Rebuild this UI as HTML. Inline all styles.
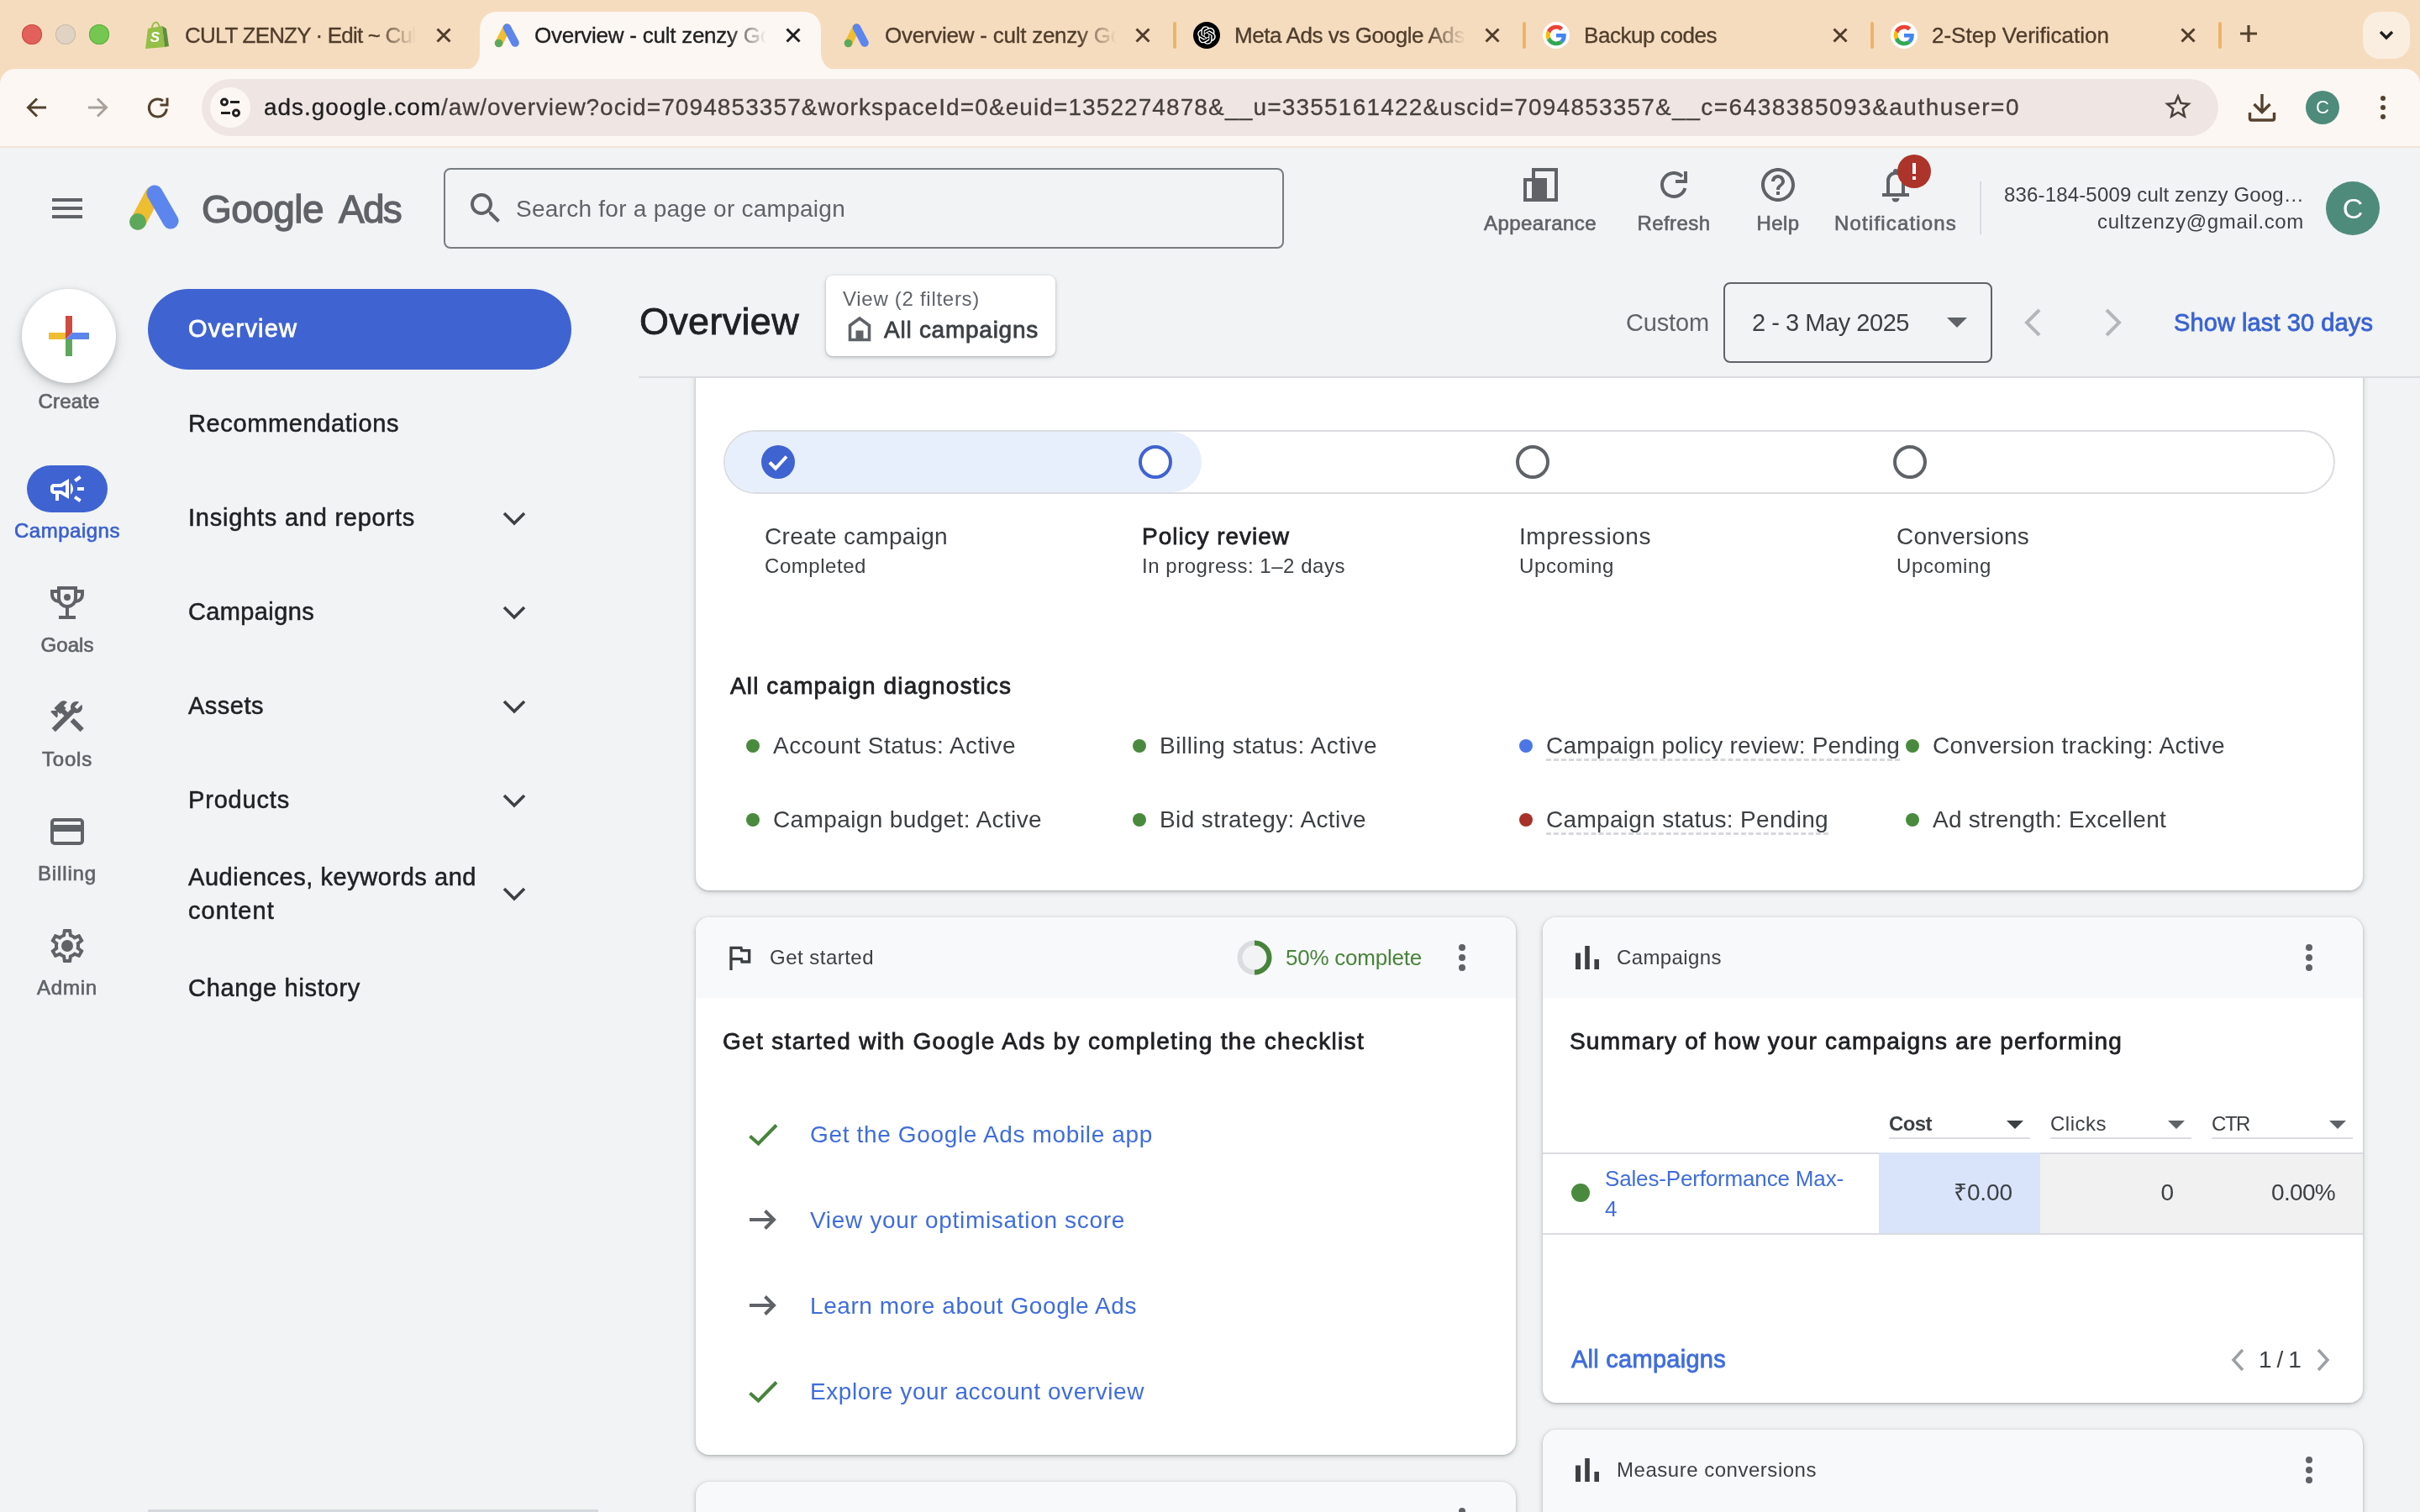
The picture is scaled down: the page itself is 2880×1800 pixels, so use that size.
<!DOCTYPE html>
<html><head><meta charset="utf-8"><title>Overview - cult zenzy Google Ads</title>
<style>
html,body{margin:0;padding:0}
body{width:2880px;height:1800px;overflow:hidden;position:relative;background:#f1f3f4;font-family:"Liberation Sans", sans-serif;}
.a{position:absolute;display:block}
.t{position:absolute;white-space:nowrap;display:block}
#r{position:absolute;left:0;top:0;width:2880px;height:1800px;overflow:hidden;will-change:transform}
</style></head><body><div id="r">
<div class="a" style="left:0px;top:0px;width:2880px;height:176px;background:#f6dcbf"></div>
<div class="a" style="left:0px;top:82px;width:2880px;height:92px;background:#fdf7f3;border-radius:18px 18px 0 0"></div>
<div class="a" style="left:0px;top:174px;width:2880px;height:2px;background:#f3e3d6"></div>
<div class="a" style="left:26px;top:29px;width:24px;height:24px;background:#e3615b;border-radius:50%;box-shadow:inset 0 0 0 1px #cc4a44"></div>
<div class="a" style="left:66px;top:29px;width:24px;height:24px;background:#e0d3c3;border-radius:50%;box-shadow:inset 0 0 0 1px #c6b9aa"></div>
<div class="a" style="left:106px;top:29px;width:24px;height:24px;background:#75c752;border-radius:50%;box-shadow:inset 0 0 0 1px #58ad3f"></div>
<svg class="a" style="left:549px;top:14px" width="450" height="70" viewBox="0 0 450 70">
<path fill="#fdf7f3" d="M0 70 C14 70 22 62 22 48 L22 22 C22 8 30 0 44 0 L406 0 C420 0 428 8 428 22 L428 48 C428 62 436 70 450 70 Z"></path></svg>
<svg class="a" style="left:172px;top:25px" width="32" height="34" viewBox="0 0 32 34"><path fill="#95bf47" d="M4 9 L21 6 L24 31 L1 33 Z"></path><path fill="#5e8e3e" d="M21 6 L26 9 L29 30 L24 31 Z"></path>
<path fill="none" stroke="#95bf47" stroke-width="2" d="M9 9 C9 2 14 0 16 3 C18 6 18 8 18 8"></path>
<text x="12.5" y="25" font-family="&quot;Liberation Sans&quot;,sans-serif" font-size="17" font-weight="700" font-style="italic" fill="#fff" text-anchor="middle">S</text></svg>
<div class="t" style="left:220px;top:25px;width:277px;overflow:hidden;font-size:26px;line-height:34px;color:#4e3d2c;-webkit-text-stroke:0.35px #4e3d2c;-webkit-mask-image:linear-gradient(to right,#000 229px,transparent 275px);mask-image:linear-gradient(to right,#000 229px,transparent 275px)"><span style="letter-spacing: -0.827px;">CULT ZENZY · Edit ~ Cul</span></div>
<svg class="a" style="left:519px;top:33px" width="18" height="18" viewBox="0 0 18 18"><path d="M1.5 1.5 L16.5 16.5 M16.5 1.5 L1.5 16.5" stroke="#4e3d2c" stroke-width="3" fill="none"></path></svg>
<svg class="a" style="left:588px;top:27px" width="32" height="30" viewBox="0 0 32 30"><line x1="15" y1="6" x2="6" y2="24" stroke="#efbd32" stroke-width="9.5" stroke-linecap="round"></line>
<line x1="15.5" y1="6" x2="25" y2="24" stroke="#5c85ee" stroke-width="9.5" stroke-linecap="round"></line>
<circle cx="5.5" cy="24.5" r="4.8" fill="#5ea85c"></circle></svg>
<div class="t" style="left:636px;top:25px;width:278px;overflow:hidden;font-size:26px;line-height:34px;color:#1f1f1f;-webkit-text-stroke:0.35px #1f1f1f;-webkit-mask-image:linear-gradient(to right,#000 230px,transparent 276px);mask-image:linear-gradient(to right,#000 230px,transparent 276px)"><span style="letter-spacing: -0.249px;">Overview - cult zenzy Go</span></div>
<svg class="a" style="left:935px;top:33px" width="18" height="18" viewBox="0 0 18 18"><path d="M1.5 1.5 L16.5 16.5 M16.5 1.5 L1.5 16.5" stroke="#1f1f1f" stroke-width="3" fill="none"></path></svg>
<svg class="a" style="left:1004px;top:27px" width="32" height="30" viewBox="0 0 32 30"><line x1="15" y1="6" x2="6" y2="24" stroke="#efbd32" stroke-width="9.5" stroke-linecap="round"></line>
<line x1="15.5" y1="6" x2="25" y2="24" stroke="#5c85ee" stroke-width="9.5" stroke-linecap="round"></line>
<circle cx="5.5" cy="24.5" r="4.8" fill="#5ea85c"></circle></svg>
<div class="t" style="left:1053px;top:25px;width:278px;overflow:hidden;font-size:26px;line-height:34px;color:#4e3d2c;-webkit-text-stroke:0.35px #4e3d2c;-webkit-mask-image:linear-gradient(to right,#000 230px,transparent 276px);mask-image:linear-gradient(to right,#000 230px,transparent 276px)"><span style="letter-spacing: -0.249px;">Overview - cult zenzy Go</span></div>
<svg class="a" style="left:1351px;top:33px" width="18" height="18" viewBox="0 0 18 18"><path d="M1.5 1.5 L16.5 16.5 M16.5 1.5 L1.5 16.5" stroke="#4e3d2c" stroke-width="3" fill="none"></path></svg>
<div class="a" style="left:1396px;top:26px;width:4px;height:32px;background:#ecb469;border-radius:2px"></div>
<svg class="a" style="left:1420px;top:26px" width="32" height="32" viewBox="0 0 32 32"><circle cx="16" cy="16" r="16" fill="#000"></circle>
<g transform="translate(5.2 5.2) scale(0.9)"><path fill="#fff" d="M22.2819 9.8211a5.9847 5.9847 0 0 0-.5157-4.9108 6.0462 6.0462 0 0 0-6.5098-2.9A6.0651 6.0651 0 0 0 4.9807 4.1818a5.9847 5.9847 0 0 0-3.9977 2.9 6.0462 6.0462 0 0 0 .7427 7.0966 5.98 5.98 0 0 0 .511 4.9107 6.051 6.051 0 0 0 6.5146 2.9001A5.9847 5.9847 0 0 0 13.2599 24a6.0557 6.0557 0 0 0 5.7718-4.2058 5.9894 5.9894 0 0 0 3.9977-2.9001 6.0557 6.0557 0 0 0-.7475-7.0729zm-9.022 12.6081a4.4755 4.4755 0 0 1-2.8764-1.0408l.1419-.0804 4.7783-2.7582a.7948.7948 0 0 0 .3927-.6813v-6.7369l2.02 1.1686a.071.071 0 0 1 .038.0615v5.5826a4.504 4.504 0 0 1-4.4945 4.4944zm-9.6607-4.1254a4.4708 4.4708 0 0 1-.5346-3.0137l.142.0852 4.783 2.7582a.7712.7712 0 0 0 .7806 0l5.8428-3.3685v2.3324a.0804.0804 0 0 1-.0332.0615L9.74 19.9502a4.4992 4.4992 0 0 1-6.1408-1.6464zM2.3408 7.8956a4.485 4.485 0 0 1 2.3655-1.9728V11.6a.7664.7664 0 0 0 .3879.6765l5.8144 3.3543-2.0201 1.1685a.0757.0757 0 0 1-.071 0l-4.8303-2.7865A4.504 4.504 0 0 1 2.3408 7.872zm16.5963 3.8558L13.1038 8.364 15.1192 7.2a.0757.0757 0 0 1 .071 0l4.8303 2.7913a4.4944 4.4944 0 0 1-.6765 8.1042v-5.6772a.79.79 0 0 0-.407-.667zm2.0107-3.0231l-.142-.0852-4.7735-2.7818a.7759.7759 0 0 0-.7854 0L9.409 9.2297V6.8974a.0662.0662 0 0 1 .0284-.0615l4.8303-2.7866a4.4992 4.4992 0 0 1 6.6802 4.66zM8.3065 12.863l-2.02-1.1638a.0804.0804 0 0 1-.038-.0567V6.0742a4.4992 4.4992 0 0 1 7.3757-3.4537l-.142.0805L8.704 5.459a.7948.7948 0 0 0-.3927.6813zm1.0976-2.3654l2.602-1.4998 2.6069 1.4998v2.9994l-2.5974 1.4997-2.6067-1.4997Z"></path></g></svg>
<div class="t" style="left:1469px;top:25px;width:278px;overflow:hidden;font-size:26px;line-height:34px;color:#4e3d2c;-webkit-text-stroke:0.35px #4e3d2c;-webkit-mask-image:linear-gradient(to right,#000 230px,transparent 276px);mask-image:linear-gradient(to right,#000 230px,transparent 276px)"><span style="letter-spacing: -0.422px;">Meta Ads vs Google Ads</span></div>
<svg class="a" style="left:1767px;top:33px" width="18" height="18" viewBox="0 0 18 18"><path d="M1.5 1.5 L16.5 16.5 M16.5 1.5 L1.5 16.5" stroke="#4e3d2c" stroke-width="3" fill="none"></path></svg>
<div class="a" style="left:1812px;top:26px;width:4px;height:32px;background:#ecb469;border-radius:2px"></div>
<svg class="a" style="left:1836px;top:26px" width="32" height="32" viewBox="0 0 48 48"><circle cx="24" cy="24" r="24" fill="#fff"></circle><g transform="translate(5.5 5.5) scale(0.77)">
<path fill="#EA4335" d="M24 9.5c3.54 0 6.71 1.22 9.21 3.6l6.85-6.85C35.9 2.38 30.47 0 24 0 14.62 0 6.51 5.38 2.56 13.22l7.98 6.19C12.43 13.72 17.74 9.5 24 9.5z"></path>
<path fill="#4285F4" d="M46.98 24.55c0-1.57-.15-3.09-.38-4.55H24v9.02h12.94c-.58 2.96-2.26 5.48-4.78 7.18l7.73 6c4.51-4.18 7.09-10.36 7.09-17.65z"></path>
<path fill="#FBBC05" d="M10.53 28.59c-.48-1.45-.76-2.99-.76-4.59s.27-3.14.76-4.59l-7.98-6.19C.92 16.46 0 20.12 0 24c0 3.88.92 7.54 2.56 10.78l7.97-6.19z"></path>
<path fill="#34A853" d="M24 48c6.48 0 11.93-2.13 15.89-5.81l-7.73-6c-2.15 1.45-4.92 2.3-8.16 2.3-6.26 0-11.57-4.22-13.47-9.91l-7.98 6.19C6.51 42.62 14.62 48 24 48z"></path></g></svg>
<div class="t" style="left:1885px;top:25px;width:280px;overflow:hidden;font-size:26px;line-height:34px;color:#4e3d2c;-webkit-text-stroke:0.35px #4e3d2c;-webkit-mask-image:linear-gradient(to right,#000 232px,transparent 278px);mask-image:linear-gradient(to right,#000 232px,transparent 278px)"><span style="letter-spacing: -0.444px;">Backup codes</span></div>
<svg class="a" style="left:2181px;top:33px" width="18" height="18" viewBox="0 0 18 18"><path d="M1.5 1.5 L16.5 16.5 M16.5 1.5 L1.5 16.5" stroke="#4e3d2c" stroke-width="3" fill="none"></path></svg>
<div class="a" style="left:2226px;top:26px;width:4px;height:32px;background:#ecb469;border-radius:2px"></div>
<svg class="a" style="left:2250px;top:26px" width="32" height="32" viewBox="0 0 48 48"><circle cx="24" cy="24" r="24" fill="#fff"></circle><g transform="translate(5.5 5.5) scale(0.77)">
<path fill="#EA4335" d="M24 9.5c3.54 0 6.71 1.22 9.21 3.6l6.85-6.85C35.9 2.38 30.47 0 24 0 14.62 0 6.51 5.38 2.56 13.22l7.98 6.19C12.43 13.72 17.74 9.5 24 9.5z"></path>
<path fill="#4285F4" d="M46.98 24.55c0-1.57-.15-3.09-.38-4.55H24v9.02h12.94c-.58 2.96-2.26 5.48-4.78 7.18l7.73 6c4.51-4.18 7.09-10.36 7.09-17.65z"></path>
<path fill="#FBBC05" d="M10.53 28.59c-.48-1.45-.76-2.99-.76-4.59s.27-3.14.76-4.59l-7.98-6.19C.92 16.46 0 20.12 0 24c0 3.88.92 7.54 2.56 10.78l7.97-6.19z"></path>
<path fill="#34A853" d="M24 48c6.48 0 11.93-2.13 15.89-5.81l-7.73-6c-2.15 1.45-4.92 2.3-8.16 2.3-6.26 0-11.57-4.22-13.47-9.91l-7.98 6.19C6.51 42.62 14.62 48 24 48z"></path></g></svg>
<div class="t" style="left:2299px;top:25px;width:280px;overflow:hidden;font-size:26px;line-height:34px;color:#4e3d2c;-webkit-text-stroke:0.35px #4e3d2c;-webkit-mask-image:linear-gradient(to right,#000 232px,transparent 278px);mask-image:linear-gradient(to right,#000 232px,transparent 278px)"><span style="letter-spacing: -0.001px;">2-Step Verification</span></div>
<svg class="a" style="left:2595px;top:33px" width="18" height="18" viewBox="0 0 18 18"><path d="M1.5 1.5 L16.5 16.5 M16.5 1.5 L1.5 16.5" stroke="#4e3d2c" stroke-width="3" fill="none"></path></svg>
<div class="a" style="left:2640px;top:26px;width:4px;height:32px;background:#ecb469;border-radius:2px"></div>
<svg class="a" style="left:2664px;top:28px" width="24" height="24" viewBox="0 0 24 24"><path d="M12 2 V22 M2 12 H22" stroke="#54422f" stroke-width="3.2" fill="none"></path></svg>
<div class="a" style="left:2812px;top:14px;width:56px;height:56px;background:#faeee0;border-radius:20px"></div>
<svg class="a" style="left:2828px;top:32px" width="24" height="20" viewBox="0 0 24 20"><path d="M5 6 L12 13 L19 6" stroke="#1f1f1f" stroke-width="3.4" fill="none"></path></svg>
<svg class="a" style="left:30px;top:114px" width="28" height="28" viewBox="0 0 28 28"><path d="M25 14 H4 M14 3.5 L3.5 14 L14 24.5" stroke="#54422f" stroke-width="3" fill="none" stroke-linejoin="miter"></path></svg>
<svg class="a" style="left:102px;top:114px" width="28" height="28" viewBox="0 0 28 28"><path d="M3 14 H24 M14 3.5 L24.5 14 L14 24.5" stroke="#a9a09a" stroke-width="3" fill="none"></path></svg>
<svg class="a" style="left:172px;top:112px" width="32" height="32" viewBox="0 0 32 32"><path d="M26.3 17.5 A10.5 10.5 0 1 1 22 8" stroke="#54422f" stroke-width="3" fill="none"></path><path d="M27 4.5 V13 H18.5" stroke="#54422f" stroke-width="3" fill="none"></path></svg>
<div class="a" style="left:240px;top:94px;width:2400px;height:68px;background:#efe6e3;border-radius:34px"></div>
<div class="a" style="left:250px;top:104px;width:48px;height:48px;background:#fdf7f3;border-radius:50%"></div>
<svg class="a" style="left:260px;top:114px" width="28" height="28" viewBox="0 0 28 28"><g stroke="#1f1f1f" stroke-width="3" fill="none"><circle cx="7" cy="7.5" r="3.5"></circle><path d="M14 7.5 H25"></path><circle cx="21" cy="20.5" r="3.5"></circle><path d="M3 20.5 H14"></path></g></svg>
<div class="t" style="left:314px;top:108px;font-size:28px;line-height:40px;color:#46403e;-webkit-text-stroke:0.3px #46403e"><span style="color: rgb(31, 31, 31); -webkit-text-stroke: 0.3px rgb(31, 31, 31); letter-spacing: 0.951px;">ads.google.com</span><span style="letter-spacing: 0.892px;">/aw/overview?</span><span style="letter-spacing: 1.091px;">ocid=7094853357&amp;workspaceId=0&amp;euid=1352274878</span><span style="letter-spacing: 1.2px;">&amp;__u=3355161422&amp;uscid=7094853357</span><span style="letter-spacing: 1.482px;">&amp;__c=6438385093&amp;authuser=0</span></div>
<svg class="a" style="left:2573.0px;top:108.0px" width="38" height="38" viewBox="0 0 24 24"><path fill="#4a403a" d="M22 9.24l-7.19-.62L12 2 9.19 8.63 2 9.24l5.46 4.73L5.82 21 12 17.27 18.18 21l-1.63-7.03L22 9.24zM12 15.4l-3.76 2.27 1-4.28-3.32-2.88 4.38-.38L12 6.1l1.71 4.04 4.38.38-3.32 2.88 1 4.28L12 15.4z"></path></svg>
<svg class="a" style="left:2675px;top:110px" width="34" height="36" viewBox="0 0 34 36"><g stroke="#54422f" stroke-width="3.4" fill="none"><path d="M17 2 V23 M7.5 14 L17 23.5 L26.5 14"></path><path d="M2.5 24 V31 Q2.5 33 4.5 33 H29.5 Q31.5 33 31.5 31 V24"></path></g></svg>
<div class="a" style="left:2744px;top:108px;width:40px;height:40px;background:#4e8b7b;border-radius:50%"></div>
<div class="t" style="left:2764px;transform:translateX(-50%);top:114.0px;font-size:22px;line-height:28px;color:#fff;font-weight:400;">C</div>
<div class="a" style="left:2833px;top:114px;width:6px;height:6px;background:#54422f;border-radius:50%"></div>
<div class="a" style="left:2833px;top:125px;width:6px;height:6px;background:#54422f;border-radius:50%"></div>
<div class="a" style="left:2833px;top:136px;width:6px;height:6px;background:#54422f;border-radius:50%"></div>
<div class="a" style="left:62px;top:236px;width:36px;height:4px;background:#5f6368"></div>
<div class="a" style="left:62px;top:246px;width:36px;height:4px;background:#5f6368"></div>
<div class="a" style="left:62px;top:256px;width:36px;height:4px;background:#5f6368"></div>
<svg class="a" style="left:152px;top:218px" width="64" height="58" viewBox="0 0 64 58"><line x1="30" y1="13" x2="13" y2="45" stroke="#efbd32" stroke-width="19" stroke-linecap="round"></line>
<line x1="32" y1="12" x2="51" y2="45" stroke="#5c85ee" stroke-width="19" stroke-linecap="round"></line>
<circle cx="12" cy="46" r="10" fill="#5ea85c"></circle></svg>
<div class="t" style="left: 240px; top: 220px; font-size: 46px; line-height: 58px; color: rgb(95, 99, 104); font-weight: 400; -webkit-text-stroke: 1.29px rgb(95, 99, 104); letter-spacing: -0.557px;">Google</div>
<div class="t" style="left: 403px; top: 220px; font-size: 46px; line-height: 58px; color: rgb(95, 99, 104); font-weight: 400; -webkit-text-stroke: 1.29px rgb(95, 99, 104); letter-spacing: -1.755px;">Ads</div>
<div class="a" style="left:528px;top:200px;width:1000px;height:96px;border:2px solid #777c81;border-radius:8px;box-sizing:border-box"></div>
<svg class="a" style="left:554.0px;top:224.0px" width="48" height="48" viewBox="0 0 24 24"><path fill="#5f6368" d="M15.5 14h-.79l-.28-.27C15.41 12.59 16 11.11 16 9.5 16 5.91 13.09 3 9.5 3S3 5.91 3 9.5 5.91 16 9.5 16c1.61 0 3.09-.59 4.23-1.57l.27.28v.79l5 4.99L20.49 19l-4.99-5zm-6 0C7.01 14 5 11.99 5 9.5S7.01 5 9.5 5 14 7.01 14 9.5 11.99 14 9.5 14z"></path></svg>
<div class="t" style="left: 614px; top: 230.5px; font-size: 28px; line-height: 35px; color: rgb(95, 99, 104); font-weight: 400; letter-spacing: 0.26px;">Search for a page or campaign</div>
<svg class="a" style="left:1811px;top:198px" width="44" height="44" viewBox="0 0 44 44"><g fill="none" stroke="#5f6368" stroke-width="4"><rect x="14" y="4" width="27" height="36"></rect><rect x="4" y="16" width="24" height="24"></rect></g><rect x="14" y="16" width="14" height="24" fill="#5f6368"></rect></svg>
<div class="t" style="left: 1833px; transform: translateX(-50%); top: 251px; font-size: 24px; line-height: 30px; color: rgb(95, 99, 104); font-weight: 400; -webkit-text-stroke: 0.67px rgb(95, 99, 104); letter-spacing: 0.456px;">Appearance</div>
<svg class="a" style="left:1968px;top:196px" width="48" height="48" viewBox="0 0 48 48"><g fill="none" stroke="#5f6368" stroke-width="4"><path d="M33.9 14.1 A14 14 0 1 0 37.4 28"></path><path d="M38 8 V20 H26"></path></g></svg>
<div class="t" style="left: 1992px; transform: translateX(-50%); top: 251px; font-size: 24px; line-height: 30px; color: rgb(95, 99, 104); font-weight: 400; -webkit-text-stroke: 0.67px rgb(95, 99, 104); letter-spacing: 0.422px;">Refresh</div>
<svg class="a" style="left:2092.0px;top:196.0px" width="48" height="48" viewBox="0 0 24 24"><path fill="#5f6368" d="M11 18h2v-2h-2v2zm1-16C6.48 2 2 6.48 2 12s4.48 10 10 10 10-4.48 10-10S17.52 2 12 2zm0 18c-4.41 0-8-3.59-8-8s3.59-8 8-8 8 3.59 8 8-3.59 8-8 8zm0-14c-2.21 0-4 1.79-4 4h2c0-1.1.9-2 2-2s2 .9 2 2c0 2-3 1.75-3 5h2c0-2.25 3-2.5 3-5 0-2.21-1.79-4-4-4z"></path></svg>
<div class="t" style="left: 2116px; transform: translateX(-50%); top: 251px; font-size: 24px; line-height: 30px; color: rgb(95, 99, 104); font-weight: 400; -webkit-text-stroke: 0.67px rgb(95, 99, 104); letter-spacing: 0.41px;">Help</div>
<svg class="a" style="left:2238px;top:198px" width="36" height="46" viewBox="0 0 36 46"><g fill="none" stroke="#5f6368" stroke-width="4"><path d="M2 34 H34"></path><path d="M9 34 V17 a9 9 0 0 1 18 0 V34"></path></g><circle cx="18" cy="6" r="3" fill="#5f6368"></circle><path d="M13.5 38 a4.5 4.5 0 0 0 9 0 z" fill="#5f6368"></path></svg>
<div class="a" style="left:2258px;top:184px;width:40px;height:40px;background:#ac342a;border-radius:50%"></div>
<div class="a" style="left:2276px;top:194px;width:4px;height:13px;background:#fff"></div>
<div class="a" style="left:2276px;top:210px;width:4px;height:4px;background:#fff"></div>
<div class="t" style="left: 2256px; transform: translateX(-50%); top: 251px; font-size: 24px; line-height: 30px; color: rgb(95, 99, 104); font-weight: 400; -webkit-text-stroke: 0.67px rgb(95, 99, 104); letter-spacing: 1.174px;">Notifications</div>
<div class="a" style="left:2356px;top:216px;width:2px;height:63px;background:#dadce0"></div>
<div class="t" style="right: 138px; top: 217px; font-size: 24px; line-height: 30px; color: rgb(60, 64, 67); font-weight: 400; letter-spacing: 0.165px;">836-184-5009 cult zenzy Goog…</div>
<div class="t" style="right: 138px; top: 249px; font-size: 24px; line-height: 30px; color: rgb(60, 64, 67); font-weight: 400; letter-spacing: 0.644px;">cultzenzy@gmail.com</div>
<div class="a" style="left:2768px;top:216px;width:64px;height:64px;background:#4e8b7b;border-radius:50%"></div>
<div class="t" style="left:2800px;transform:translateX(-50%);top:227.0px;font-size:34px;line-height:42px;color:#fff;font-weight:400;">C</div>
<div class="a" style="left:26px;top:344px;width:112px;height:112px;background:#fff;border-radius:50%;box-shadow:0 2px 6px rgba(60,64,67,.25),0 6px 16px rgba(60,64,67,.15)"></div>
<div class="a" style="left:58px;top:396px;width:20px;height:8px;background:#eebd31"></div>
<div class="a" style="left:86px;top:396px;width:20px;height:8px;background:#5c85ee"></div>
<div class="a" style="left:78px;top:376px;width:8px;height:20px;background:#cf4a3f"></div>
<div class="a" style="left:78px;top:404px;width:8px;height:20px;background:#5ea85c"></div>
<svg class="a" style="left:78px;top:396px" width="8" height="8" viewBox="0 0 8 8"><path d="M0 0 H8 L0 8 Z" fill="#cf4a3f"></path><path d="M8 0 V8 H0 Z" fill="#5c85ee"></path></svg>
<div class="t" style="left: 82px; transform: translateX(-50%); top: 463px; font-size: 24px; line-height: 30px; color: rgb(95, 99, 104); font-weight: 400; -webkit-text-stroke: 0.67px rgb(95, 99, 104); letter-spacing: 0.159px;">Create</div>
<div class="a" style="left:32px;top:554px;width:96px;height:56px;background:#3f63d1;border-radius:28px"></div>
<svg class="a" style="left:56.0px;top:558.0px" width="48" height="48" viewBox="0 0 24 24"><path fill="#fff" d="M18 11v2h4v-2h-4zm-2 6.61c.96.71 2.21 1.65 3.2 2.39.4-.53.8-1.07 1.2-1.6-.99-.74-2.24-1.68-3.2-2.4-.4.54-.8 1.08-1.2 1.61zM20.4 5.6c-.4-.53-.8-1.07-1.2-1.6-.99.74-2.24 1.68-3.2 2.4.4.53.8 1.07 1.2 1.6.96-.72 2.21-1.65 3.2-2.4zM4 9c-1.1 0-2 .9-2 2v2c0 1.1.9 2 2 2h1v4h2v-4h1l5 3V6L8 9H4zm5.03 1.71L11 9.53v4.94l-1.97-1.18-.48-.29H4v-2h4.55l.48-.29zM15.5 12c0-1.33-.58-2.53-1.5-3.35v6.69c.92-.81 1.5-2.01 1.5-3.34z"></path></svg>
<div class="t" style="left: 80px; transform: translateX(-50%); top: 617px; font-size: 24px; line-height: 30px; color: rgb(58, 95, 205); font-weight: 400; -webkit-text-stroke: 0.67px rgb(58, 95, 205); letter-spacing: 0.51px;">Campaigns</div>
<svg class="a" style="left:56px;top:694px" width="48" height="48" viewBox="0 0 48 48"><g fill="none" stroke="#5f6368" stroke-width="4"><path d="M14 6 H34 V18 A10 10 0 0 1 14 18 Z"></path><path d="M14 10 H6 V14 A8 8 0 0 0 14 22 M34 10 H42 V14 A8 8 0 0 1 34 22"></path><path d="M24 28 V40 M14 41 H34"></path></g><circle cx="24" cy="17" r="4" fill="#5f6368"></circle></svg>
<div class="t" style="left: 80px; transform: translateX(-50%); top: 753px; font-size: 24px; line-height: 30px; color: rgb(95, 99, 104); font-weight: 400; -webkit-text-stroke: 0.67px rgb(95, 99, 104); letter-spacing: 0.059px;">Goals</div>
<svg class="a" style="left:56.0px;top:829.0px" width="48" height="48" viewBox="0 0 24 24"><path fill="#5f6368" d="M13.783 15.172l2.121-2.121 5.996 5.996-2.121 2.121zM17.5 10c1.93 0 3.5-1.57 3.5-3.5 0-.58-.16-1.12-.41-1.6l-2.7 2.7-1.49-1.49 2.7-2.7c-.48-.25-1.02-.41-1.6-.41C15.57 3 14 4.57 14 6.5c0 .41.08.8.21 1.16l-1.85 1.85-1.78-1.78.71-.71-1.41-1.41L12 3.49c-1.17-1.17-3.07-1.17-4.24 0L4.22 7.03l1.41 1.41H2.81l-.71.71 3.54 3.54.71-.71V9.15l1.41 1.41.71-.71 1.78 1.78-7.41 7.41 2.12 2.12L16.34 9.79c.36.13.75.21 1.16.21z"></path></svg>
<div class="t" style="left: 80px; transform: translateX(-50%); top: 889px; font-size: 24px; line-height: 30px; color: rgb(95, 99, 104); font-weight: 400; -webkit-text-stroke: 0.67px rgb(95, 99, 104); letter-spacing: 0.794px;">Tools</div>
<svg class="a" style="left:60px;top:974px" width="40" height="32" viewBox="0 0 40 32"><rect x="2" y="2" width="36" height="28" rx="3" fill="none" stroke="#5f6368" stroke-width="4"></rect><rect x="2" y="8" width="36" height="8" fill="#5f6368"></rect></svg>
<div class="t" style="left: 80px; transform: translateX(-50%); top: 1025px; font-size: 24px; line-height: 30px; color: rgb(95, 99, 104); font-weight: 400; -webkit-text-stroke: 0.67px rgb(95, 99, 104); letter-spacing: 0.853px;">Billing</div>
<svg class="a" style="left:56.0px;top:1102.0px" width="48" height="48" viewBox="0 0 24 24"><path fill="#5f6368" d="M19.43 12.98c.04-.32.07-.64.07-.98 0-.34-.03-.66-.07-.98l2.11-1.65c.19-.15.24-.42.12-.64l-2-3.46c-.09-.16-.26-.25-.44-.25-.06 0-.12.01-.17.03l-2.49 1c-.52-.4-1.08-.73-1.69-.98l-.38-2.65C14.46 2.18 14.25 2 14 2h-4c-.25 0-.46.18-.49.42l-.38 2.65c-.61.25-1.17.59-1.69.98l-2.49-1c-.06-.02-.12-.03-.18-.03-.17 0-.34.09-.43.25l-2 3.46c-.13.22-.07.49.12.64l2.11 1.65c-.04.32-.07.65-.07.98 0 .33.03.66.07.98l-2.11 1.65c-.19.15-.24.42-.12.64l2 3.46c.09.16.26.25.44.25.06 0 .12-.01.17-.03l2.49-1c.52.4 1.08.73 1.69.98l.38 2.65c.03.24.24.42.49.42h4c.25 0 .46-.18.49-.42l.38-2.65c.61-.25 1.17-.59 1.69-.98l2.49 1c.06.02.12.03.18.03.17 0 .34-.09.43-.25l2-3.46c.12-.22.07-.49-.12-.64l-2.11-1.65zm-1.98-1.71c.04.31.05.52.05.73 0 .21-.02.43-.05.73l-.14 1.13.89.7 1.08.84-.7 1.21-1.27-.51-1.04-.42-.9.68c-.43.32-.84.56-1.25.73l-1.06.43-.16 1.13-.2 1.35h-1.4l-.19-1.35-.16-1.13-1.06-.43c-.43-.18-.83-.41-1.23-.71l-.91-.7-1.06.43-1.27.51-.7-1.21 1.08-.84.89-.7-.14-1.13c-.03-.31-.05-.54-.05-.74s.02-.43.05-.73l.14-1.13-.89-.7-1.08-.84.7-1.21 1.27.51 1.04.42.9-.68c.43-.32.84-.56 1.25-.73l1.06-.43.16-1.13.2-1.35h1.39l.19 1.35.16 1.13 1.06.43c.43.18.83.41 1.23.71l.91.7 1.06-.43 1.27-.51.7 1.21-1.07.85-.89.7.14 1.13z"></path></svg>
<div class="a" style="left:73px;top:1119px;width:14px;height:14px;background:#5f6368;border-radius:50%"></div>
<div class="t" style="left: 80px; transform: translateX(-50%); top: 1161px; font-size: 24px; line-height: 30px; color: rgb(95, 99, 104); font-weight: 400; -webkit-text-stroke: 0.67px rgb(95, 99, 104); letter-spacing: 0.794px;">Admin</div>
<div class="a" style="left:176px;top:344px;width:504px;height:96px;background:#3f63d1;border-radius:48px"></div>
<div class="t" style="left: 224px; top: 373px; font-size: 29px; line-height: 36px; color: rgb(255, 255, 255); font-weight: 400; -webkit-text-stroke: 0.81px rgb(255, 255, 255); letter-spacing: 1.143px;">Overview</div>
<div class="t" style="left: 224px; top: 486px; font-size: 29px; line-height: 36px; color: rgb(32, 33, 36); font-weight: 400; -webkit-text-stroke: 0.52px rgb(32, 33, 36); letter-spacing: 0.614px;">Recommendations</div>
<div class="t" style="left: 224px; top: 598px; font-size: 29px; line-height: 36px; color: rgb(32, 33, 36); font-weight: 400; -webkit-text-stroke: 0.52px rgb(32, 33, 36); letter-spacing: 0.765px;">Insights and reports</div>
<svg class="a" style="left:598px;top:609px" width="28" height="17" viewBox="0 0 28 17"><path d="M2 2 L14 14 L26 2" stroke="#3c4043" stroke-width="3.6" fill="none"></path></svg>
<div class="t" style="left: 224px; top: 710px; font-size: 29px; line-height: 36px; color: rgb(32, 33, 36); font-weight: 400; -webkit-text-stroke: 0.52px rgb(32, 33, 36); letter-spacing: 0.368px;">Campaigns</div>
<svg class="a" style="left:598px;top:721px" width="28" height="17" viewBox="0 0 28 17"><path d="M2 2 L14 14 L26 2" stroke="#3c4043" stroke-width="3.6" fill="none"></path></svg>
<div class="t" style="left: 224px; top: 822px; font-size: 29px; line-height: 36px; color: rgb(32, 33, 36); font-weight: 400; -webkit-text-stroke: 0.52px rgb(32, 33, 36); letter-spacing: 0.495px;">Assets</div>
<svg class="a" style="left:598px;top:833px" width="28" height="17" viewBox="0 0 28 17"><path d="M2 2 L14 14 L26 2" stroke="#3c4043" stroke-width="3.6" fill="none"></path></svg>
<div class="t" style="left: 224px; top: 934px; font-size: 29px; line-height: 36px; color: rgb(32, 33, 36); font-weight: 400; -webkit-text-stroke: 0.52px rgb(32, 33, 36); letter-spacing: 0.818px;">Products</div>
<svg class="a" style="left:598px;top:945px" width="28" height="17" viewBox="0 0 28 17"><path d="M2 2 L14 14 L26 2" stroke="#3c4043" stroke-width="3.6" fill="none"></path></svg>
<div class="t" style="left: 224px; top: 1026px; font-size: 29px; line-height: 36px; color: rgb(32, 33, 36); font-weight: 400; -webkit-text-stroke: 0.52px rgb(32, 33, 36); letter-spacing: 0.544px;">Audiences, keywords and</div>
<div class="t" style="left: 224px; top: 1066px; font-size: 29px; line-height: 36px; color: rgb(32, 33, 36); font-weight: 400; -webkit-text-stroke: 0.52px rgb(32, 33, 36); letter-spacing: 1.123px;">content</div>
<svg class="a" style="left:598px;top:1056px" width="28" height="17" viewBox="0 0 28 17"><path d="M2 2 L14 14 L26 2" stroke="#3c4043" stroke-width="3.6" fill="none"></path></svg>
<div class="t" style="left: 224px; top: 1158px; font-size: 29px; line-height: 36px; color: rgb(32, 33, 36); font-weight: 400; -webkit-text-stroke: 0.52px rgb(32, 33, 36); letter-spacing: 0.71px;">Change history</div>
<div class="a" style="left:176px;top:1797px;width:536px;height:3px;background:#d5d8dc"></div>
<div class="t" style="left: 761px; top: 355px; font-size: 45px; line-height: 56px; color: rgb(32, 33, 36); font-weight: 400; -webkit-text-stroke: 0.81px rgb(32, 33, 36); letter-spacing: 0.307px;">Overview</div>
<div class="a" style="left:983px;top:328px;width:273px;height:96px;background:#fff;border-radius:8px;box-shadow:0 1px 3px rgba(60,64,67,.3),0 2px 6px rgba(60,64,67,.15)"></div>
<div class="t" style="left: 1003px; top: 341px; font-size: 24px; line-height: 30px; color: rgb(95, 99, 104); font-weight: 400; letter-spacing: 0.713px;">View (2 filters)</div>
<svg class="a" style="left:1009px;top:376px" width="28" height="31" viewBox="0 0 28 31"><path d="M2.5 28.5 V11.5 L14 3 L25.5 11.5 V28.5 Z" fill="none" stroke="#5f6368" stroke-width="3.6"></path><rect x="9.5" y="17.5" width="9" height="11" fill="#5f6368"></rect></svg>
<div class="t" style="left: 1052px; top: 374.5px; font-size: 28px; line-height: 35px; color: rgb(60, 64, 67); font-weight: 400; -webkit-text-stroke: 0.78px rgb(60, 64, 67); letter-spacing: 0.745px;">All campaigns</div>
<div class="t" style="left: 1935px; top: 366px; font-size: 29px; line-height: 36px; color: rgb(95, 99, 104); font-weight: 400; letter-spacing: -0.154px;">Custom</div>
<div class="a" style="left:2051px;top:336px;width:320px;height:96px;border:2px solid #5f6368;border-radius:8px;box-sizing:border-box"></div>
<div class="t" style="left: 2085px; top: 366px; font-size: 29px; line-height: 36px; color: rgb(60, 64, 67); font-weight: 400; letter-spacing: -0.461px;">2 - 3 May 2025</div>
<svg class="a" style="left:2317px;top:378px" width="24" height="12" viewBox="0 0 24 12"><path d="M0 0 H24 L12 12 Z" fill="#5f6368"></path></svg>
<svg class="a" style="left:2408px;top:366px" width="22" height="36" viewBox="0 0 22 36"><path d="M19 3 L4 18 L19 33" stroke="#b4b6b9" stroke-width="4" fill="none"></path></svg>
<svg class="a" style="left:2504px;top:366px" width="22" height="36" viewBox="0 0 22 36"><path d="M3 3 L18 18 L3 33" stroke="#b4b6b9" stroke-width="4" fill="none"></path></svg>
<div class="t" style="left: 2587px; top: 366px; font-size: 29px; line-height: 36px; color: rgb(58, 99, 210); font-weight: 400; -webkit-text-stroke: 0.81px rgb(58, 99, 210); letter-spacing: 0.097px;">Show last 30 days</div>
<div class="a" style="left:760px;top:450px;width:2120px;height:1350px;overflow:hidden">
<div class="a" style="left:68px;top:-50px;width:1984px;height:660px;background:#fff;border-radius:0 0 16px 16px;box-shadow:0 1px 3px rgba(60,64,67,.3),0 2px 6px 1px rgba(60,64,67,.15)"></div>
</div>
<div class="a" style="left:760px;top:448px;width:2120px;height:2px;background:#dadce0"></div>
<div class="a" style="left:861px;top:512px;width:1918px;height:76px;border:2px solid #dadce0;border-radius:38px;box-sizing:border-box;background:#fff"></div>
<div class="a" style="left:863px;top:514px;width:567px;height:72px;background:#e8effc;border-radius:36px"></div>
<div class="a" style="left:906px;top:530px;width:40px;height:40px;background:#3f63d1;border-radius:50%"></div>
<svg class="a" style="left:913px;top:538px" width="26" height="24" viewBox="0 0 26 24"><path d="M3 12.5 L10 19.5 L23 5.5" stroke="#fff" stroke-width="4" fill="none"></path></svg>
<div class="a" style="left:1355px;top:530px;width:40px;height:40px;border:4px solid #3f63d1;border-radius:50%;box-sizing:border-box;background:#fff"></div>
<div class="a" style="left:1804px;top:530px;width:40px;height:40px;border:4px solid #5f6368;border-radius:50%;box-sizing:border-box"></div>
<div class="a" style="left:2253px;top:530px;width:40px;height:40px;border:4px solid #5f6368;border-radius:50%;box-sizing:border-box"></div>
<div class="t" style="left: 910px; top: 620.5px; font-size: 28px; line-height: 35px; color: rgb(60, 64, 67); font-weight: 400; letter-spacing: 0.318px;">Create campaign</div>
<div class="t" style="left: 910px; top: 659px; font-size: 24px; line-height: 30px; color: rgb(60, 64, 67); font-weight: 400; letter-spacing: 0.549px;">Completed</div>
<div class="t" style="left: 1359px; top: 620.5px; font-size: 28px; line-height: 35px; color: rgb(32, 33, 36); font-weight: 400; -webkit-text-stroke: 0.78px rgb(32, 33, 36); letter-spacing: 0.97px;">Policy review</div>
<div class="t" style="left: 1359px; top: 659px; font-size: 24px; line-height: 30px; color: rgb(60, 64, 67); font-weight: 400; letter-spacing: 0.533px;">In progress: 1–2 days</div>
<div class="t" style="left: 1808px; top: 620.5px; font-size: 28px; line-height: 35px; color: rgb(60, 64, 67); font-weight: 400; letter-spacing: 0.551px;">Impressions</div>
<div class="t" style="left: 1808px; top: 659px; font-size: 24px; line-height: 30px; color: rgb(60, 64, 67); font-weight: 400; letter-spacing: 0.619px;">Upcoming</div>
<div class="t" style="left: 2257px; top: 620.5px; font-size: 28px; line-height: 35px; color: rgb(60, 64, 67); font-weight: 400; letter-spacing: 0.214px;">Conversions</div>
<div class="t" style="left: 2257px; top: 659px; font-size: 24px; line-height: 30px; color: rgb(60, 64, 67); font-weight: 400; letter-spacing: 0.619px;">Upcoming</div>
<div class="t" style="left: 869px; top: 798.5px; font-size: 28px; line-height: 35px; color: rgb(32, 33, 36); font-weight: 400; -webkit-text-stroke: 0.78px rgb(32, 33, 36); letter-spacing: 1.118px;">All campaign diagnostics</div>
<div class="a" style="left:888px;top:880px;width:16px;height:16px;background:#4a8a3f;border-radius:50%"></div>
<div class="t" style="left: 920px; top: 869.5px; font-size: 28px; line-height: 35px; color: rgb(60, 64, 67); font-weight: 400; letter-spacing: 0.473px;">Account Status: Active</div>
<div class="a" style="left:1348px;top:880px;width:16px;height:16px;background:#4a8a3f;border-radius:50%"></div>
<div class="t" style="left: 1380px; top: 869.5px; font-size: 28px; line-height: 35px; color: rgb(60, 64, 67); font-weight: 400; letter-spacing: 0.525px;">Billing status: Active</div>
<div class="a" style="left:1808px;top:880px;width:16px;height:16px;background:#4a76e6;border-radius:50%"></div>
<div class="t" style="left: 1840px; top: 869.5px; font-size: 28px; line-height: 35px; color: rgb(60, 64, 67); font-weight: 400; letter-spacing: 0.226px;">Campaign policy review: Pending</div>
<div class="a" style="left:1840px;top:902.5px;width:421px;height:0px;border-top:3px dashed #d6d8dc"></div>
<div class="a" style="left:2268px;top:880px;width:16px;height:16px;background:#4a8a3f;border-radius:50%"></div>
<div class="t" style="left: 2300px; top: 869.5px; font-size: 28px; line-height: 35px; color: rgb(60, 64, 67); font-weight: 400; letter-spacing: 0.381px;">Conversion tracking: Active</div>
<div class="a" style="left:888px;top:968px;width:16px;height:16px;background:#4a8a3f;border-radius:50%"></div>
<div class="t" style="left: 920px; top: 957.5px; font-size: 28px; line-height: 35px; color: rgb(60, 64, 67); font-weight: 400; letter-spacing: 0.378px;">Campaign budget: Active</div>
<div class="a" style="left:1348px;top:968px;width:16px;height:16px;background:#4a8a3f;border-radius:50%"></div>
<div class="t" style="left: 1380px; top: 957.5px; font-size: 28px; line-height: 35px; color: rgb(60, 64, 67); font-weight: 400; letter-spacing: 0.395px;">Bid strategy: Active</div>
<div class="a" style="left:1808px;top:968px;width:16px;height:16px;background:#a8312a;border-radius:50%"></div>
<div class="t" style="left: 1840px; top: 957.5px; font-size: 28px; line-height: 35px; color: rgb(60, 64, 67); font-weight: 400; letter-spacing: 0.315px;">Campaign status: Pending</div>
<div class="a" style="left:1840px;top:990.5px;width:336px;height:0px;border-top:3px dashed #d6d8dc"></div>
<div class="a" style="left:2268px;top:968px;width:16px;height:16px;background:#4a8a3f;border-radius:50%"></div>
<div class="t" style="left: 2300px; top: 957.5px; font-size: 28px; line-height: 35px; color: rgb(60, 64, 67); font-weight: 400; letter-spacing: 0.256px;">Ad strength: Excellent</div>
<div class="a" style="left:828px;top:1092px;width:976px;height:640px;background:#fff;border-radius:16px;box-shadow:0 1px 3px rgba(60,64,67,.3),0 2px 6px 1px rgba(60,64,67,.15)"></div>
<div class="a" style="left:828px;top:1092px;width:976px;height:96px;background:#f8f9fa;border-radius:16px 18px 0 0"></div>
<svg class="a" style="left:859.5px;top:1119.7px" width="40" height="40" viewBox="0 0 24 24"><path fill="#3c4043" d="M12.36 6l.4 2H18v6h-3.36l-.4-2H7V6h5.36M14 4H5v17h2v-7h5.6l.4 2h7V6h-5.6L14 4z"></path></svg>
<div class="t" style="left: 916px; top: 1125px; font-size: 24px; line-height: 30px; color: rgb(60, 64, 67); font-weight: 400; letter-spacing: 0.479px;">Get started</div>
<svg class="a" style="left:1471px;top:1118px" width="44" height="44" viewBox="0 0 44 44"><circle cx="22" cy="22" r="17.5" fill="#f1f3f4" stroke="#dadce0" stroke-width="6"></circle><path d="M22 4.5 A17.5 17.5 0 0 1 22 39.5" fill="none" stroke="#47843a" stroke-width="6"></path></svg>
<div class="t" style="left: 1530px; top: 1124px; font-size: 26px; line-height: 32px; color: rgb(71, 132, 58); font-weight: 400; letter-spacing: -0.23px;">50% complete</div>
<div class="a" style="left:1736px;top:1124px;width:8px;height:8px;background:#5f6368;border-radius:50%"></div>
<div class="a" style="left:1736px;top:1136px;width:8px;height:8px;background:#5f6368;border-radius:50%"></div>
<div class="a" style="left:1736px;top:1148px;width:8px;height:8px;background:#5f6368;border-radius:50%"></div>
<div class="t" style="left: 860px; top: 1221.5px; font-size: 28px; line-height: 35px; color: rgb(32, 33, 36); font-weight: 400; -webkit-text-stroke: 0.78px rgb(32, 33, 36); letter-spacing: 1.327px;">Get started with Google Ads by completing the checklist</div>
<svg class="a" style="left:890px;top:1331px" width="38" height="40" viewBox="0 0 38 40"><path d="M2.5 21.5 L12.5 30.5 L34 8.5" stroke="#47843a" stroke-width="4" fill="none"></path></svg>
<div class="t" style="left: 964px; top: 1332.5px; font-size: 28px; line-height: 35px; color: rgb(63, 109, 219); font-weight: 400; letter-spacing: 0.65px;">Get the Google Ads mobile app</div>
<svg class="a" style="left:890px;top:1433px" width="38" height="40" viewBox="0 0 38 40"><path d="M2 19 H30 M20.5 8.5 L31 19 L20.5 29.5" stroke="#5f6368" stroke-width="4" fill="none"></path></svg>
<div class="t" style="left: 964px; top: 1434.5px; font-size: 28px; line-height: 35px; color: rgb(63, 109, 219); font-weight: 400; letter-spacing: 0.683px;">View your optimisation score</div>
<svg class="a" style="left:890px;top:1535px" width="38" height="40" viewBox="0 0 38 40"><path d="M2 19 H30 M20.5 8.5 L31 19 L20.5 29.5" stroke="#5f6368" stroke-width="4" fill="none"></path></svg>
<div class="t" style="left: 964px; top: 1536.5px; font-size: 28px; line-height: 35px; color: rgb(63, 109, 219); font-weight: 400; letter-spacing: 0.571px;">Learn more about Google Ads</div>
<svg class="a" style="left:890px;top:1637px" width="38" height="40" viewBox="0 0 38 40"><path d="M2.5 21.5 L12.5 30.5 L34 8.5" stroke="#47843a" stroke-width="4" fill="none"></path></svg>
<div class="t" style="left: 964px; top: 1638.5px; font-size: 28px; line-height: 35px; color: rgb(63, 109, 219); font-weight: 400; letter-spacing: 0.576px;">Explore your account overview</div>
<div class="a" style="left:828px;top:1764px;width:976px;height:80px;background:#f8f9fa;border-radius:16px 18px 0 0;box-shadow:0 1px 3px rgba(60,64,67,.3),0 2px 6px 1px rgba(60,64,67,.15)"></div>
<div class="a" style="left:1736px;top:1795px;width:8px;height:8px;background:#5f6368;border-radius:50%"></div>
<div class="a" style="left:1836px;top:1092px;width:976px;height:578px;background:#fff;border-radius:16px;box-shadow:0 1px 3px rgba(60,64,67,.3),0 2px 6px 1px rgba(60,64,67,.15)"></div>
<div class="a" style="left:1836px;top:1092px;width:976px;height:96px;background:#f8f9fa;border-radius:16px 18px 0 0"></div>
<svg class="a" style="left:1865.0px;top:1116.0px" width="48" height="48" viewBox="0 0 24 24"><path fill="#3c4043" d="M5 9.2h3V19H5zM10.6 5h2.8v14h-2.8zm5.6 8H19v6h-2.8z"></path></svg>
<div class="t" style="left: 1924px; top: 1125px; font-size: 24px; line-height: 30px; color: rgb(60, 64, 67); font-weight: 400; letter-spacing: 0.399px;">Campaigns</div>
<div class="a" style="left:2744px;top:1124px;width:8px;height:8px;background:#5f6368;border-radius:50%"></div>
<div class="a" style="left:2744px;top:1136px;width:8px;height:8px;background:#5f6368;border-radius:50%"></div>
<div class="a" style="left:2744px;top:1148px;width:8px;height:8px;background:#5f6368;border-radius:50%"></div>
<div class="t" style="left: 1868px; top: 1221.5px; font-size: 28px; line-height: 35px; color: rgb(32, 33, 36); font-weight: 400; -webkit-text-stroke: 0.78px rgb(32, 33, 36); letter-spacing: 1.196px;">Summary of how your campaigns are performing</div>
<div class="t" style="left: 2248px; top: 1323px; font-size: 24px; line-height: 30px; color: rgb(60, 64, 67); font-weight: 700; letter-spacing: -0.586px;">Cost</div>
<div class="a" style="left:2248px;top:1354px;width:168px;height:2px;background:#dadce0"></div>
<svg class="a" style="left:2388px;top:1334px" width="20" height="10" viewBox="0 0 20 10"><path d="M0 0 H20 L10 10 Z" fill="#3c4043"></path></svg>
<div class="t" style="left: 2440px; top: 1323px; font-size: 24px; line-height: 30px; color: rgb(60, 64, 67); font-weight: 400; letter-spacing: 0.5px;">Clicks</div>
<div class="a" style="left:2440px;top:1354px;width:168px;height:2px;background:#dadce0"></div>
<svg class="a" style="left:2580px;top:1334px" width="20" height="10" viewBox="0 0 20 10"><path d="M0 0 H20 L10 10 Z" fill="#5f6368"></path></svg>
<div class="t" style="left: 2632px; top: 1323px; font-size: 24px; line-height: 30px; color: rgb(60, 64, 67); font-weight: 400; letter-spacing: -1.443px;">CTR</div>
<div class="a" style="left:2632px;top:1354px;width:168px;height:2px;background:#dadce0"></div>
<svg class="a" style="left:2772px;top:1334px" width="20" height="10" viewBox="0 0 20 10"><path d="M0 0 H20 L10 10 Z" fill="#5f6368"></path></svg>
<div class="a" style="left:1836px;top:1372px;width:976px;height:2px;background:#dadce0"></div>
<div class="a" style="left:2236px;top:1372px;width:192px;height:97px;background:#d9e4fb"></div>
<div class="a" style="left:2428px;top:1374px;width:384px;height:95px;background:#f1f1f1"></div>
<div class="a" style="left:1836px;top:1468px;width:976px;height:2px;background:#dadce0"></div>
<div class="a" style="left:1870px;top:1409px;width:22px;height:22px;background:#4a8a3f;border-radius:50%"></div>
<div class="t" style="left: 1910px; top: 1387px; font-size: 26px; line-height: 32px; color: rgb(63, 109, 219); font-weight: 400; letter-spacing: -0.161px;">Sales-Performance Max-</div>
<div class="t" style="left:1910px;top:1423.0px;font-size:26px;line-height:32px;color:#3f6ddb;font-weight:400;">4</div>
<div class="t" style="right: 485px; top: 1401.5px; font-size: 28px; line-height: 35px; color: rgb(60, 64, 67); font-weight: 400; letter-spacing: -0.1px;">₹0.00</div>
<div class="t" style="right:293px;top:1401.5px;font-size:28px;line-height:35px;color:#3c4043;font-weight:400;">0</div>
<div class="t" style="right: 101px; top: 1401.5px; font-size: 28px; line-height: 35px; color: rgb(60, 64, 67); font-weight: 400; letter-spacing: -0.681px;">0.00%</div>
<div class="t" style="left: 1870px; top: 1600px; font-size: 29px; line-height: 36px; color: rgb(63, 109, 219); font-weight: 400; -webkit-text-stroke: 0.81px rgb(63, 109, 219); letter-spacing: 0.267px;">All campaigns</div>
<svg class="a" style="left:2654px;top:1604px" width="18" height="30" viewBox="0 0 18 30"><path d="M15 3 L4 15 L15 27" stroke="#9aa0a6" stroke-width="3.5" fill="none"></path></svg>
<div class="t" style="left: 2688px; top: 1600.5px; font-size: 28px; line-height: 35px; color: rgb(60, 64, 67); font-weight: 400; letter-spacing: -0.897px;">1 / 1</div>
<svg class="a" style="left:2756px;top:1604px" width="18" height="30" viewBox="0 0 18 30"><path d="M3 3 L14 15 L3 27" stroke="#9aa0a6" stroke-width="3.5" fill="none"></path></svg>
<div class="a" style="left:1836px;top:1702px;width:976px;height:140px;background:#f8f9fa;border-radius:16px 18px 0 0;box-shadow:0 1px 3px rgba(60,64,67,.3),0 2px 6px 1px rgba(60,64,67,.15)"></div>
<svg class="a" style="left:1865.0px;top:1726.0px" width="48" height="48" viewBox="0 0 24 24"><path fill="#3c4043" d="M5 9.2h3V19H5zM10.6 5h2.8v14h-2.8zm5.6 8H19v6h-2.8z"></path></svg>
<div class="t" style="left: 1924px; top: 1735px; font-size: 24px; line-height: 30px; color: rgb(60, 64, 67); font-weight: 400; letter-spacing: 0.521px;">Measure conversions</div>
<div class="a" style="left:2744px;top:1734px;width:8px;height:8px;background:#5f6368;border-radius:50%"></div>
<div class="a" style="left:2744px;top:1746px;width:8px;height:8px;background:#5f6368;border-radius:50%"></div>
<div class="a" style="left:2744px;top:1758px;width:8px;height:8px;background:#5f6368;border-radius:50%"></div>
</div></body></html>
